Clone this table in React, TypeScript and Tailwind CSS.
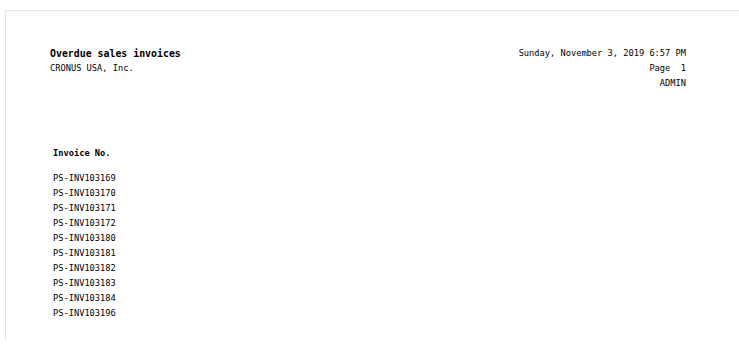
import React from 'react';

const INVOICES = [
  'PS-INV103169',
  'PS-INV103170',
  'PS-INV103171',
  'PS-INV103172',
  'PS-INV103180',
  'PS-INV103181',
  'PS-INV103182',
  'PS-INV103183',
  'PS-INV103184',
  'PS-INV103196',
];

export default function App() {
  return (
    <div className="w-[739px] h-[356px] bg-white pt-[10px] pl-[5px] overflow-hidden font-['DejaVu_Sans_Mono',monospace] text-black">
      <div className="h-[331px] border-l border-t border-[#e3e3e3] pl-[44px] pr-[53px] pt-[35px]">
        {/* Report header */}
        <div className="flex justify-between">
          <div>
            <div className="text-[9.9px] leading-[15px] font-bold">Overdue sales invoices</div>
            <div className="text-[8.7px] leading-[15px]">CRONUS USA, Inc.</div>
          </div>
          <div className="text-right text-[8.7px] leading-[15px]">
            <div>Sunday, November 3, 2019 6:57 PM</div>
            <div>Page&nbsp;&nbsp;1</div>
            <div>ADMIN</div>
          </div>
        </div>

        {/* Invoice table */}
        <div className="pl-[3px] mt-[55px]">
          <div className="text-[8.7px] leading-[15px] font-bold mb-[10px]">Invoice No.</div>
          {INVOICES.map((inv) => (
            <div key={inv} className="text-[8.7px] leading-[15px]">{inv}</div>
          ))}
        </div>
      </div>
    </div>
  );
}
